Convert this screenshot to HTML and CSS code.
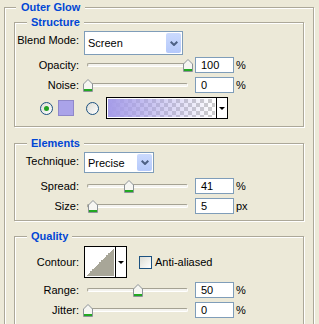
FILE: index.html
```html
<!DOCTYPE html>
<html lang="en">
<head>
<meta charset="UTF-8">
<title>Outer Glow</title>
<link rel="stylesheet" href="styles.css">
</head>
<body>

<fieldset class="group outer">
    <legend>Outer Glow</legend>

    <!-- Structure -->
    <fieldset class="group section structure">
        <legend>Structure</legend>

        <div class="row row-combo">
            <span class="lbl">Blend Mode:</span>
            <div class="combo combo-blend">
                <span class="combo-text">Screen</span>
                <span class="combo-btn"><svg width="8" height="5" viewBox="0 0 8 5"><path d="M0.7 0.7 L4 4 L7.3 0.7" fill="none" stroke="#4d6185" stroke-width="2"/></svg></span>
            </div>
        </div>

        <div class="row row-first">
            <span class="lbl">Opacity:</span>
            <div class="slider"><div class="track"></div><svg class="thumb" style="left:99px" width="10" height="13" viewBox="0 0 10 13"><path d="M0.5 5 L5 0.5 L9.5 5 V12.5 H0.5 Z" fill="#f6f6f2" stroke="#8d9398"/><path d="M1 10 H9 V12 H1 Z" fill="#22a822"/></svg></div>
            <div class="num">100</div><span class="unit">%</span>
        </div>

        <div class="row">
            <span class="lbl">Noise:</span>
            <div class="slider"><div class="track"></div><svg class="thumb" style="left:-1px" width="10" height="13" viewBox="0 0 10 13"><path d="M0.5 5 L5 0.5 L9.5 5 V12.5 H0.5 Z" fill="#f6f6f2" stroke="#8d9398"/><path d="M1 10 H9 V12 H1 Z" fill="#22a822"/></svg></div>
            <div class="num">0</div><span class="unit">%</span>
        </div>

        <div class="fill-row">
            <span class="radio on"></span>
            <span class="swatch"></span>
            <span class="radio radio-grad"></span>
            <div class="gradient">
                <div class="gradient-bar"></div>
                <div class="drop"><span class="tri"></span></div>
            </div>
        </div>
    </fieldset>

    <!-- Elements -->
    <fieldset class="group section elements">
        <legend>Elements</legend>

        <div class="row row-combo row-tech">
            <span class="lbl">Technique:</span>
            <div class="combo combo-tech">
                <span class="combo-text">Precise</span>
                <span class="combo-btn"><svg width="8" height="5" viewBox="0 0 8 5"><path d="M0.7 0.7 L4 4 L7.3 0.7" fill="none" stroke="#4d6185" stroke-width="2"/></svg></span>
            </div>
        </div>

        <div class="row row-spread">
            <span class="lbl">Spread:</span>
            <div class="slider"><div class="track"></div><svg class="thumb" style="left:40px" width="10" height="13" viewBox="0 0 10 13"><path d="M0.5 5 L5 0.5 L9.5 5 V12.5 H0.5 Z" fill="#f6f6f2" stroke="#8d9398"/><path d="M1 10 H9 V12 H1 Z" fill="#22a822"/></svg></div>
            <div class="num">41</div><span class="unit">%</span>
        </div>

        <div class="row">
            <span class="lbl">Size:</span>
            <div class="slider"><div class="track"></div><svg class="thumb" style="left:4px" width="10" height="13" viewBox="0 0 10 13"><path d="M0.5 5 L5 0.5 L9.5 5 V12.5 H0.5 Z" fill="#f6f6f2" stroke="#8d9398"/><path d="M1 10 H9 V12 H1 Z" fill="#22a822"/></svg></div>
            <div class="num">5</div><span class="unit">px</span>
        </div>
    </fieldset>

    <!-- Quality -->
    <fieldset class="group section quality">
        <legend>Quality</legend>

        <div class="row row-contour">
            <span class="lbl">Contour:</span>
            <div class="contour">
                <div class="contour-curve"></div>
                <div class="drop"><span class="tri"></span></div>
            </div>
            <span class="check"></span>
            <span class="check-text">Anti-aliased</span>
        </div>

        <div class="row">
            <span class="lbl">Range:</span>
            <div class="slider"><div class="track"></div><svg class="thumb" style="left:49px" width="10" height="13" viewBox="0 0 10 13"><path d="M0.5 5 L5 0.5 L9.5 5 V12.5 H0.5 Z" fill="#f6f6f2" stroke="#8d9398"/><path d="M1 10 H9 V12 H1 Z" fill="#22a822"/></svg></div>
            <div class="num">50</div><span class="unit">%</span>
        </div>

        <div class="row">
            <span class="lbl">Jitter:</span>
            <div class="slider"><div class="track"></div><svg class="thumb" style="left:-1px" width="10" height="13" viewBox="0 0 10 13"><path d="M0.5 5 L5 0.5 L9.5 5 V12.5 H0.5 Z" fill="#f6f6f2" stroke="#8d9398"/><path d="M1 10 H9 V12 H1 Z" fill="#22a822"/></svg></div>
            <div class="num">0</div><span class="unit">%</span>
        </div>
    </fieldset>
</fieldset>

</body>
</html>
```

FILE: styles.css
```css
body {
    margin: 0;
    width: 319px;
    height: 324px;
    overflow: hidden;
    background-color: #ece9d8;
    font-family: "Liberation Sans", Arial, sans-serif;
    font-size: 11px;
    color: #000;
}

/* group boxes */
.group {
    margin: 0;
    min-width: 0;
    border: 1px solid #aca899;
    box-shadow: 1px 1px 0 #fff, inset 1px 1px 0 #fff;
}

.group > legend {
    font-weight: bold;
    color: #0046d5;
    line-height: 14px;
    background-color: #ece9d8;
}

.outer {
    box-sizing: border-box;
    width: 310px;
    height: 330px;
    margin-left: 4px;
    padding: 1px 9px 0;
}

    .outer > legend {
        margin-left: 2px;
        padding: 0 5px;
    }

.section {
    padding: 2px 0 7px;
}

    .section > legend {
        margin-left: 12px;
        padding: 0 4px;
    }

.elements {
    margin-top: 9px;
    padding-bottom: 6px;
}

.quality {
    margin-top: 8px;
    padding-top: 3px;
}

/* rows */
.row {
    display: flex;
    align-items: center;
    height: 16px;
    margin-top: 4px;
}

.row-combo {
    align-items: flex-start;
    height: 24px;
    margin-top: 0;
}

    .row-combo .lbl {
        padding-top: 2px;
        line-height: 14px;
    }

.row-tech {
    height: 21px;
}

.row-first {
    margin-top: 2px;
}

.row-spread {
    margin-top: 5px;
}

.row-contour {
    height: 32px;
    margin-top: 0;
}

.lbl {
    flex: none;
    width: 64px;
    margin-right: 5px;
    text-align: right;
    white-space: nowrap;
}

/* combo boxes */
.combo {
    display: flex;
    box-sizing: border-box;
    height: 100%;
    border: 1px solid #7f9db9;
    background-color: #fff;
}

.combo-blend {
    width: 99px;
}

.combo-tech {
    width: 70px;
}

.combo-text {
    flex: 1;
    padding-left: 3px;
    align-self: center;
}

.combo-btn {
    display: flex;
    align-items: center;
    justify-content: center;
    width: 15px;
    margin: 1px;
    border-radius: 2px;
    background: linear-gradient(#cbdafd, #b5c9fb);
}

/* sliders */
.slider {
    position: relative;
    display: flex;
    align-items: center;
    flex: none;
    width: 110px;
    height: 16px;
    margin-right: 1px;
}

.track {
    box-sizing: border-box;
    width: 101px;
    height: 4px;
    margin-left: 3px;
    border: 1px solid;
    border-color: #a5a293 #fff #fff #a5a293;
    border-radius: 2px;
    background-color: #f4f3ee;
}

.thumb {
    position: absolute;
    top: 2px;
}

.num {
    box-sizing: border-box;
    flex: none;
    width: 39px;
    height: 16px;
    padding-left: 5px;
    border: 1px solid #7f9db9;
    background-color: #fff;
    line-height: 14px;
}

.unit {
    margin-left: 2px;
}

/* fill row */
.fill-row {
    display: flex;
    align-items: center;
    height: 22px;
    margin-top: 4px;
}

.radio {
    position: relative;
    flex: none;
    box-sizing: border-box;
    width: 13px;
    height: 13px;
    margin-left: 25px;
    border: 1px solid #1c5180;
    border-radius: 50%;
    background: linear-gradient(135deg, #dcdcd4, #fff);
}

    .radio.on::after {
        content: "";
        position: absolute;
        left: 3px;
        top: 3px;
        width: 5px;
        height: 5px;
        border-radius: 50%;
        background-color: #21a121;
    }

.radio-grad {
    margin-left: 12px;
}

.swatch {
    flex: none;
    box-sizing: border-box;
    width: 16px;
    height: 16px;
    margin-left: 5px;
    border: 1px solid #8f88c9;
    background-color: #aaa3e9;
}

.gradient {
    display: flex;
    box-sizing: border-box;
    width: 122px;
    height: 22px;
    margin-left: 7px;
    border: 1px solid #000;
    background-color: #fff;
}

.gradient-bar {
    flex: 1;
    border: 1px solid #fff;
    background:
        linear-gradient(to right, #a59ce8, rgba(165, 156, 232, 0)),
        repeating-conic-gradient(#cdcdcd 0 25%, #fff 0 50%) 0 0 / 8px 8px;
}

.drop {
    display: flex;
    align-items: center;
    justify-content: center;
    width: 10px;
    border-left: 1px solid #000;
    background-color: #fff;
}

.tri {
    width: 0;
    height: 0;
    border-left: 3px solid transparent;
    border-right: 3px solid transparent;
    border-top: 3px solid #000;
}

/* contour */
.contour {
    display: flex;
    box-sizing: border-box;
    width: 43px;
    height: 32px;
    border: 1px solid #000;
    background-color: #fff;
}

.contour-curve {
    flex: 1;
    border: 1px solid #fff;
    background: linear-gradient(to bottom right, #fff 50%, #a8a698 50%);
}

.check {
    flex: none;
    box-sizing: border-box;
    width: 13px;
    height: 13px;
    margin-left: 12px;
    border: 1px solid #1c5180;
    background: linear-gradient(135deg, #dcdcd4, #fff);
}

.check-text {
    margin-left: 3px;
}
```
